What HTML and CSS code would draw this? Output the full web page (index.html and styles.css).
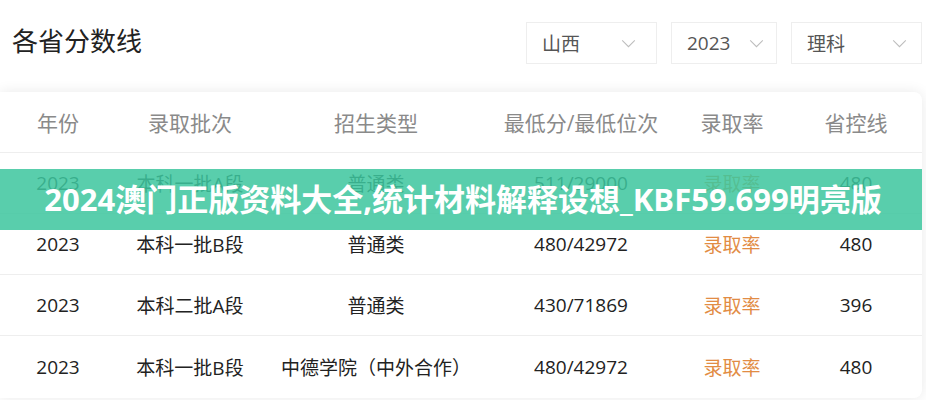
FILE: index.html
```html
<!DOCTYPE html>
<html lang="zh-CN">
<head>
<meta charset="utf-8">
<title>各省分数线</title>
<link rel="stylesheet" href="styles.css">
</head>
<body>
<div class="page">
  <div class="topbar">
    <h1 class="title">各省分数线</h1>
    <div class="filters">
      <div class="select s-prov"><span>山西</span><svg class="chev" viewBox="0 0 16 10"><path d="M1 1.5 L8 8.5 L15 1.5" fill="none" stroke="#bdbdbd" stroke-width="1.2"/></svg></div>
      <div class="select s-year"><span>2023</span><svg class="chev" viewBox="0 0 16 10"><path d="M1 1.5 L8 8.5 L15 1.5" fill="none" stroke="#bdbdbd" stroke-width="1.2"/></svg></div>
      <div class="select s-type"><span>理科</span><svg class="chev" viewBox="0 0 16 10"><path d="M1 1.5 L8 8.5 L15 1.5" fill="none" stroke="#bdbdbd" stroke-width="1.2"/></svg></div>
    </div>
  </div>
  <div class="card">
    <div class="row head">
      <div>年份</div><div>录取批次</div><div>招生类型</div><div>最低分/最低位次</div><div>录取率</div><div>省控线</div>
    </div>
    <div class="row">
      <div>2023</div><div>本科一批A段</div><div>普通类</div><div>511/29000</div><div class="rate">录取率</div><div>480</div>
    </div>
    <div class="row">
      <div>2023</div><div>本科一批B段</div><div>普通类</div><div>480/42972</div><div class="rate">录取率</div><div>480</div>
    </div>
    <div class="row">
      <div>2023</div><div>本科二批A段</div><div>普通类</div><div>430/71869</div><div class="rate">录取率</div><div>396</div>
    </div>
    <div class="row last">
      <div>2023</div><div>本科一批B段</div><div>中德学院（中外合作）</div><div>480/42972</div><div class="rate">录取率</div><div>480</div>
    </div>
    <div class="banner">2024澳门正版资料大全,统计材料解释设想_KBF59.699明亮版</div>
  </div>
</div>
</body>
</html>
```

FILE: styles.css
```css
* { box-sizing: border-box; }
html, body {
  margin: 0;
  padding: 0;
  background: #ffffff;
  font-family: "Open Sans", "Noto Sans CJK SC", sans-serif;
  color: #222;
}
.page {
  width: 926px;
  height: 400px;
  overflow: hidden;
}
.topbar {
  height: 92px;
  display: flex;
  align-items: flex-start;
  justify-content: space-between;
  padding: 0 4px 0 12px;
}
.title {
  margin: 22px 0 0 0;
  font-family: "Noto Sans CJK SC", sans-serif;
  font-weight: 400;
  font-size: 26px;
  line-height: 36px;
  color: #222;
  letter-spacing: 0;
}
.filters {
  display: flex;
  gap: 14px;
  margin-top: 22px;
}
.select {
  height: 42px;
  border: 1px solid #eeeeee;
  display: flex;
  align-items: center;
  justify-content: space-between;
  padding: 0 20px 0 15px;
  font-family: "Open Sans", "Noto Sans CJK SC", sans-serif;
  font-size: 19px;
  color: #555;
}
.s-prov { width: 131px; }
.s-year { width: 106px; padding-right: 12px; }
.s-type { width: 131px; padding-right: 14px; }
.chev { width: 15px; height: 9px; }
.card {
  position: relative;
  width: 922px;
  height: 306px;
  border-radius: 0 8px 8px 0;
  background: #fff;
  box-shadow: 0 0 14px rgba(0, 0, 0, 0.09);
}
.row {
  display: grid;
  grid-template-columns: 116px 148px 224px 186px 116px 132px;
  height: 61px;
  align-items: center;
  text-align: center;
  border-bottom: 1px solid #eeeeee;
  font-size: 19px;
  color: #222;
}
.row.last { border-bottom: none; }
.row.head {
  font-size: 21px;
  color: #8a8a8a;
}
.rate { color: #e28c44; }
.banner {
  position: absolute;
  left: 0;
  top: 77px;
  width: 922px;
  height: 61px;
  background: rgba(62, 198, 158, 0.86);
  color: #fff;
  font-family: "Open Sans", "Noto Sans CJK SC", sans-serif;
  font-weight: 700;
  font-size: 31px;
  line-height: 61px;
  text-align: center;
  padding-left: 4px;
  white-space: nowrap;
}
```
